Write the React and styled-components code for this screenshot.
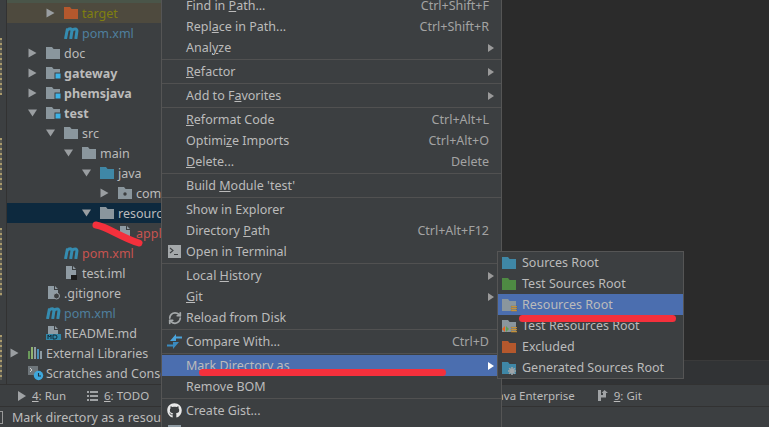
import React from 'react';
import styled, { createGlobalStyle } from 'styled-components';
import { FaGithub } from 'react-icons/fa';
import { RefreshCw } from 'lucide-react';

const GlobalStyle = createGlobalStyle`
  html, body {
    margin: 0;
    padding: 0;
    background: #3c3f41;
  }
`;

const Page = styled.div`
  position: relative;
  width: 769px;
  height: 427px;
  overflow: hidden;
  background: #3c3f41;
  color: #bbbbbb;
  font-family: "Noto Sans", "Liberation Sans", sans-serif;
  font-size: 12.5px;
`;

const Workspace = styled.div`
  display: flex;
  height: 384px;
  border-bottom: 1px solid #323232;
`;

const Stripe = styled.div`
  display: flex;
  flex-direction: column;
  flex: 0 0 7px;
  padding-top: 38px;
  box-sizing: border-box;
  border-right: 1px solid #323232;
`;

const StripeMark = styled.div`
  width: 2px;
  height: ${(p) => p.$h}px;
  margin-top: ${(p) => p.$gap || 0}px;
  background: repeating-linear-gradient(#a99a6c 0 2px, #5a5a52 2px 5px);
`;

const ProjectPanel = styled.div`
  flex: 0 0 494px;
  overflow: hidden;
`;

const Tree = styled.div`
  margin-top: -17px;
`;

const TreeRow = styled.div`
  display: flex;
  align-items: center;
  height: 20px;
  padding-left: ${(p) => p.$level * 18 + 3}px;
  background: ${(p) => p.$bg || 'transparent'};
  color: ${(p) => p.$color || '#bbbbbb'};
  font-weight: ${(p) => (p.$bold ? 700 : 400)};
  white-space: nowrap;
`;

const ArrowSlot = styled.span`
  display: flex;
  align-items: center;
  flex: 0 0 18px;
  height: 20px;
`;

const IconSlot = styled.span`
  display: flex;
  align-items: center;
  flex: 0 0 18px;
  height: 20px;
`;

const Editor = styled.div`
  display: flex;
  flex-direction: column;
  flex: 1;
  border-left: 1px solid #555555;
  background: #2b2b2b;
`;

const CodeArea = styled.div`
  flex: 1;
  border-bottom: 1px solid #3a3a3a;
`;

const EditorFooter = styled.div`
  height: 23px;
  background: #313335;
`;

const ToolBar = styled.div`
  display: flex;
  align-items: center;
  height: 21px;
  padding-left: 18px;
  border-bottom: 1px solid #323232;
  font-size: 11.5px;
  white-space: nowrap;
`;

const ToolButton = styled.div`
  display: flex;
  align-items: center;
  gap: 6px;
  margin-left: ${(p) => p.$offset || 0}px;
`;

const StatusBar = styled.div`
  display: flex;
  align-items: center;
  gap: 9px;
  height: 20px;
  white-space: nowrap;
`;

const StatusBox = styled.span`
  width: 3px;
  height: 11px;
  margin-left: -1px;
  border: 1px solid #999999;
  border-left: none;
`;

const Menu = styled.div`
  position: absolute;
  left: 161px;
  top: -6px;
  width: 339px;
  background: #3c3f41;
  border: 1px solid #555555;
`;

const MenuRow = styled.div`
  display: flex;
  align-items: center;
  height: 21px;
  padding: 0 7px 0 24px;
  position: relative;
  background: ${(p) => (p.$active ? '#4b6eaf' : 'transparent')};
  white-space: nowrap;
`;

const MenuIcon = styled.span`
  position: absolute;
  left: 5px;
  top: 3px;
  width: 15px;
  height: 15px;
  display: flex;
  align-items: center;
  justify-content: center;
`;

const MenuLabel = styled.span`
  flex: 1;
`;

const Shortcut = styled.span`
  margin-right: 5px;
  color: #a3a3a3;
`;

const Chevron = styled.span`
  width: 0;
  height: 0;
  border-left: 6px solid ${(p) => (p.$active ? '#ffffff' : '#9a9a9a')};
  border-top: 4px solid transparent;
  border-bottom: 4px solid transparent;
`;

const Separator = styled.div`
  height: 1px;
  margin: 1px 0;
  background: #515151;
`;

const SubMenu = styled.div`
  position: absolute;
  left: 497px;
  top: 251px;
  width: 185px;
  background: #3c3f41;
  border: 1px solid #555555;
`;

const SubRow = styled.div`
  display: flex;
  align-items: center;
  gap: 4px;
  height: 21px;
  padding-left: 4px;
  background: ${(p) => (p.$active ? '#4b6eaf' : 'transparent')};
  white-space: nowrap;
`;

const Scribble = styled.svg`
  position: absolute;
  left: 0;
  top: 0;
  pointer-events: none;
`;

const TreeArrow = ({ open }) => (
  <svg width="10" height="10" viewBox="0 0 10 10">
    <path d={open ? 'M0 1.5h9L4.5 8.5z' : 'M0.5 0.5l8 4.5-8 4.5z'} fill="#9a9ea1" />
  </svg>
);

const Folder = ({ color = '#8a969d', children }) => (
  <svg width="16" height="14" viewBox="0 0 16 14">
    <path d="M0 1h6l1.6 2H14v10H0z" fill={color} />
    {children}
  </svg>
);

const ModuleBadge = () => <rect x="9" y="7" width="6" height="6" fill="#3eb3e6" stroke="#3c3f41" />;

const PackageDot = () => <circle cx="7" cy="8" r="1.7" fill="#3c3f41" />;

const ListBadge = () => (
  <path d="M9 8h6v1.2H9zM9 10h6v1.2H9zM9 12h6v1.2H9z" fill="#e0a23a" stroke="#3c3f41" strokeWidth="0.2" />
);

const GearBadge = () => (
  <g stroke="#9fa4a8" strokeWidth="1.6">
    <path d="M6 10h8M10 6v8M7.2 7.2l5.6 5.6M12.8 7.2l-5.6 5.6" />
  </g>
);

const MavenIcon = () => (
  <svg width="16" height="12" viewBox="0 0 16 12">
    <path d="M1.500 12L3.500 1.500M3.200 3.500c2-2.400 5-2.200 4.700 .6L6.700 12M7.900 3.800c2-2.500 5.400-2.300 5 .5L11.800 12" fill="none" stroke="#358cb0" strokeWidth="3" />
  </svg>
);

const FileIcon = ({ children }) => (
  <svg width="16" height="16" viewBox="0 0 16 16">
    <path d="M2 1h6v4h4v9H2zM9 1l3 3H9z" fill="#8f9ba3" />
    {children}
  </svg>
);

const LibrariesIcon = () => (
  <svg width="15" height="14" viewBox="0 0 15 14">
    <rect x="0" y="5" width="2" height="8" fill="#6a9a5b" />
    <rect x="3" y="1" width="2" height="12" fill="#8fb26f" />
    <rect x="6" y="1" width="2" height="12" fill="#8f9ba3" />
    <rect x="9" y="3" width="2" height="10" fill="#4a90b8" />
    <rect x="12" y="5" width="2" height="8" fill="#8f9ba3" />
  </svg>
);

const ScratchIcon = () => (
  <svg width="16" height="16" viewBox="0 0 16 16">
    <rect x="0" y="1" width="10" height="9" fill="#6e767b" />
    <path d="M2 3l2 2-2 2" fill="none" stroke="#d0d0d0" />
    <circle cx="10.500" cy="10.500" r="4.700" fill="#3ea8dd" />
    <path d="M10.500 8v3h2.500" fill="none" stroke="#1f3342" strokeWidth="1.100" />
  </svg>
);

const TerminalIcon = () => (
  <svg width="13" height="13" viewBox="0 0 13 13">
    <rect width="13" height="13" fill="#a4a8aa" />
    <path d="M2 3l3 2.500L2 8M6 9.500h4" fill="none" stroke="#3c3f41" strokeWidth="1.100" />
  </svg>
);

const CompareIcon = () => (
  <svg width="15" height="15" viewBox="0 0 15 15">
    <path d="M9 0v7H3zM9 2.500h6v2H9z" fill="#4aa4dc" />
    <path d="M6 15V8h6zM6 12.500H0v-2h6z" fill="#3a8bc0" />
  </svg>
);

const RunIcon = () => (
  <svg width="8" height="10" viewBox="0 0 8 10">
    <path d="M0 0l8 5-8 5z" fill="#a0a3a5" />
  </svg>
);

const TodoIcon = () => (
  <svg width="11" height="10" viewBox="0 0 11 10">
    <path d="M0 0h2v2H0zM3 0h8v2H3zM0 4h2v2H0zM3 4h8v2H3zM0 8h2v2H0zM3 8h8v2H3z" fill="#a0a3a5" />
  </svg>
);

const GitIcon = () => (
  <svg width="10" height="11" viewBox="0 0 10 11">
    <path d="M0 0h3v11H0zM3 5h2V3H3.600L6.500 0 10 3H8v4.500H3z" fill="#a0a3a5" />
  </svg>
);

const DiagramIcon = () => (
  <svg width="13" height="13" viewBox="0 0 13 13">
    <rect width="13" height="13" fill="#8f9ba3" />
  </svg>
);

const treeRows = [
  { level: 2, label: '', bg: '#4a5549' },
  { level: 2, arrow: 'right', icon: <Folder color="#b4582d" />, label: 'target', color: '#7f7f10', bg: '#4e4a3e' },
  { level: 2, icon: <MavenIcon />, label: 'pom.xml', color: '#4f7f9e' },
  { level: 1, arrow: 'right', icon: <Folder />, label: 'doc' },
  { level: 1, arrow: 'right', icon: <Folder><ModuleBadge /></Folder>, label: 'gateway', bold: true },
  { level: 1, arrow: 'right', icon: <Folder><ModuleBadge /></Folder>, label: 'phemsjava', bold: true },
  { level: 1, arrow: 'down', icon: <Folder><ModuleBadge /></Folder>, label: 'test', bold: true },
  { level: 2, arrow: 'down', icon: <Folder />, label: 'src' },
  { level: 3, arrow: 'down', icon: <Folder />, label: 'main' },
  { level: 4, arrow: 'down', icon: <Folder color="#3f87a6" />, label: 'java' },
  { level: 5, arrow: 'right', icon: <Folder><PackageDot /></Folder>, label: 'com' },
  { level: 4, arrow: 'down', icon: <Folder />, label: 'resources', bg: '#0d293e' },
  { level: 5, icon: <FileIcon />, label: 'application.yml', color: '#c75450' },
  { level: 2, icon: <MavenIcon />, label: 'pom.xml', color: '#c75450' },
  { level: 2, icon: <FileIcon><rect x="7" y="10" width="6" height="5" fill="#1b1b1b" /></FileIcon>, label: 'test.iml' },
  { level: 1, icon: <FileIcon><circle cx="10.500" cy="11" r="3" fill="#3c3f41" stroke="#9aa2a8" /></FileIcon>, label: '.gitignore' },
  { level: 1, icon: <MavenIcon />, label: 'pom.xml', color: '#4f7f9e' },
  {
    level: 1,
    icon: (
      <FileIcon>
        <rect x="0" y="9" width="15" height="6" fill="#2f86a8" />
        <path d="M2 14v-4l1.500 2L5 10v4M7 10v4h2a2 2 0 0 0 0-4z" fill="none" stroke="#12232d" strokeWidth="0.900" />
      </FileIcon>
    ),
    label: 'README.md',
  },
  { level: 0, arrow: 'right', icon: <LibrariesIcon />, label: 'External Libraries' },
  { level: 0, icon: <ScratchIcon />, label: 'Scratches and Consoles' },
];

const menuItems = [
  { label: <>Find in <u>P</u>ath...</>, shortcut: 'Ctrl+Shift+F' },
  { label: <>Repl<u>a</u>ce in Path...</>, shortcut: 'Ctrl+Shift+R' },
  { label: <>Anal<u>y</u>ze</>, sub: true },
  { sep: true },
  { label: <><u>R</u>efactor</>, sub: true },
  { sep: true },
  { label: <>Add to F<u>a</u>vorites</>, sub: true },
  { sep: true },
  { label: <><u>R</u>eformat Code</>, shortcut: 'Ctrl+Alt+L' },
  { label: <>Optimi<u>z</u>e Imports</>, shortcut: 'Ctrl+Alt+O' },
  { label: <><u>D</u>elete...</>, shortcut: 'Delete' },
  { sep: true },
  { label: <>Build <u>M</u>odule 'test'</> },
  { sep: true },
  { label: 'Show in Explorer' },
  { label: <>Directory <u>P</u>ath</>, shortcut: 'Ctrl+Alt+F12' },
  { label: 'Open in Terminal', icon: <TerminalIcon /> },
  { sep: true },
  { label: <>Local <u>H</u>istory</>, sub: true },
  { label: <><u>G</u>it</>, sub: true },
  { label: 'Reload from Disk', icon: <RefreshCw size={14} strokeWidth={3} color="#a4a8aa" /> },
  { sep: true },
  { label: 'Compare With...', shortcut: 'Ctrl+D', icon: <CompareIcon /> },
  { sep: true },
  { label: 'Mark Directory as', sub: true, active: true },
  { label: 'Remove BOM' },
  { sep: true },
  { label: 'Create Gist...', icon: <FaGithub size={15} color="#e8e8e8" /> },
  { label: '', icon: <DiagramIcon /> },
];

const subItems = [
  { icon: <Folder color="#3f87a6" />, label: 'Sources Root' },
  { icon: <Folder color="#4e8a43" />, label: 'Test Sources Root' },
  { icon: <Folder><ListBadge /></Folder>, label: 'Resources Root', active: true },
  {
    icon: (
      <Folder>
        <ListBadge />
        <path d="M0 10l3-3v6z" fill="#e8651e" />
        <path d="M7 10L4 7v6z" fill="#5fa04e" />
      </Folder>
    ),
    label: 'Test Resources Root',
  },
  { icon: <Folder color="#b4582d" />, label: 'Excluded' },
  { icon: <Folder color="#3f87a6"><GearBadge /></Folder>, label: 'Generated Sources Root' },
];

function App() {
  return (
    <Page>
      <GlobalStyle />
      <Workspace>
        <Stripe>
          <StripeMark $h={57} />
          <StripeMark $h={52} $gap={43} />
          <StripeMark $h={68} $gap={38} />
          <StripeMark $h={45} $gap={39} />
        </Stripe>
        <ProjectPanel>
          <Tree>
            {treeRows.map((row, i) => (
              <TreeRow key={i} $level={row.level} $bg={row.bg} $color={row.color} $bold={row.bold}>
                <ArrowSlot>{row.arrow && <TreeArrow open={row.arrow === 'down'} />}</ArrowSlot>
                <IconSlot>{row.icon}</IconSlot>
                {row.label}
              </TreeRow>
            ))}
          </Tree>
        </ProjectPanel>
        <Editor>
          <CodeArea />
          <EditorFooter />
        </Editor>
      </Workspace>
      <ToolBar>
        <ToolButton>
          <RunIcon />
          <span><u>4</u>: Run</span>
        </ToolButton>
        <ToolButton $offset={21}>
          <TodoIcon />
          <span><u>6</u>: TODO</span>
        </ToolButton>
        <ToolButton $offset={345}>
          <span>Java Enterprise</span>
        </ToolButton>
        <ToolButton $offset={23}>
          <GitIcon />
          <span><u>9</u>: Git</span>
        </ToolButton>
      </ToolBar>
      <StatusBar>
        <StatusBox />
        <span>Mark directory as a resource root</span>
      </StatusBar>

      <Menu>
        {menuItems.map((item, i) =>
          item.sep ? (
            <Separator key={i} />
          ) : (
            <MenuRow key={i} $active={item.active}>
              {item.icon && <MenuIcon>{item.icon}</MenuIcon>}
              <MenuLabel>{item.label}</MenuLabel>
              {item.shortcut && <Shortcut>{item.shortcut}</Shortcut>}
              {item.sub && <Chevron $active={item.active} />}
            </MenuRow>
          ),
        )}
      </Menu>

      <SubMenu>
        {subItems.map((item, i) => (
          <SubRow key={i} $active={item.active}>
            {item.icon}
            <span>{item.label}</span>
          </SubRow>
        ))}
      </SubMenu>

      <Scribble width="769" height="427" viewBox="0 0 769 427">
        <g fill="none" stroke="#f4303c" strokeWidth="7" strokeLinecap="round">
          <path d="M96 225c12 2 24 12 43 18" />
          <path d="M202.500 372.500H442.500" />
          <path d="M522.500 318.500H672.500" />
        </g>
      </Scribble>
    </Page>
  );
}

export default App;
